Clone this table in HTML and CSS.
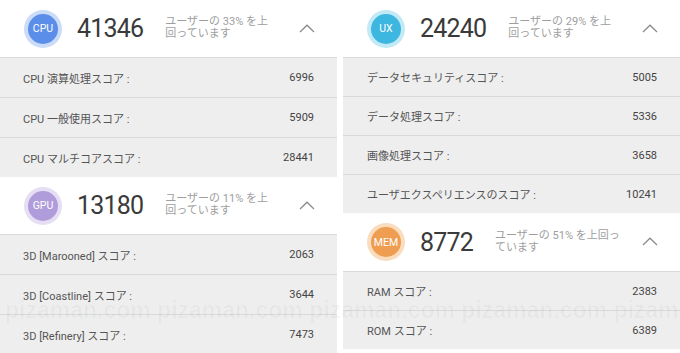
FILE: index.html
```html
<!DOCTYPE html>
<html lang="ja">
<head>
<meta charset="utf-8">
<link rel="stylesheet" href="styles.css">
</head>
<body>
<div class="page">
  <div class="panel panel-left">
    <div class="head">
      <div class="badge badge-cpu">CPU</div>
      <div class="score">41346</div>
      <div class="rank">ユーザーの 33% を上<br>回っています</div>
      <div class="chev"><svg width="16" height="9" viewBox="0 0 16 9"><path d="M1 8 L8 1.2 L15 8" fill="none" stroke="#8a8a8a" stroke-width="1.2"/></svg></div>
    </div>
    <div class="row"><span>CPU 演算処理スコア :</span><span class="val">6996</span></div>
    <div class="row"><span>CPU 一般使用スコア :</span><span class="val">5909</span></div>
    <div class="row"><span>CPU マルチコアスコア :</span><span class="val">28441</span></div>
    <div class="head">
      <div class="badge badge-gpu">GPU</div>
      <div class="score">13180</div>
      <div class="rank">ユーザーの 11% を上<br>回っています</div>
      <div class="chev"><svg width="16" height="9" viewBox="0 0 16 9"><path d="M1 8 L8 1.2 L15 8" fill="none" stroke="#8a8a8a" stroke-width="1.2"/></svg></div>
    </div>
    <div class="row"><span>3D [Marooned] スコア :</span><span class="val">2063</span></div>
    <div class="row"><span>3D [Coastline] スコア :</span><span class="val">3644</span></div>
    <div class="row"><span>3D [Refinery] スコア :</span><span class="val">7473</span></div>
  </div>
  <div class="panel panel-right">
    <div class="head">
      <div class="badge badge-ux">UX</div>
      <div class="score">24240</div>
      <div class="rank">ユーザーの 29% を上<br>回っています</div>
      <div class="chev"><svg width="16" height="9" viewBox="0 0 16 9"><path d="M1 8 L8 1.2 L15 8" fill="none" stroke="#8a8a8a" stroke-width="1.2"/></svg></div>
    </div>
    <div class="row"><span>データセキュリティスコア :</span><span class="val">5005</span></div>
    <div class="row"><span>データ処理スコア :</span><span class="val">5336</span></div>
    <div class="row"><span>画像処理スコア :</span><span class="val">3658</span></div>
    <div class="row"><span>ユーザエクスペリエンスのスコア :</span><span class="val">10241</span></div>
    <div class="head">
      <div class="badge badge-mem">MEM</div>
      <div class="score">8772</div>
      <div class="rank">ユーザーの 51% を上回っ<br>ています</div>
      <div class="chev"><svg width="16" height="9" viewBox="0 0 16 9"><path d="M1 8 L8 1.2 L15 8" fill="none" stroke="#8a8a8a" stroke-width="1.2"/></svg></div>
    </div>
    <div class="row"><span>RAM スコア :</span><span class="val">2383</span></div>
    <div class="row"><span>ROM スコア :</span><span class="val">6389</span></div>
  </div>
  <div class="watermark" aria-hidden="true">pizaman.com pizaman.com pizaman.com pizaman.com pizaman.com</div>
</div>
</body>
</html>
```

FILE: styles.css
```css
html, body {
  margin: 0;
  padding: 0;
  background: #ffffff;
}
body {
  font-family: Roboto, "Noto Sans CJK JP", sans-serif;
  width: 680px;
  height: 353px;
  overflow: hidden;
}
.page {
  position: relative;
  display: grid;
  grid-template-columns: 337px 337px;
  column-gap: 6px;
  height: 353px;
  overflow: hidden;
}
.panel {
  display: flex;
  flex-direction: column;
}
.head {
  height: 57px;
  flex: 0 0 57px;
  display: flex;
  align-items: center;
  background: #ffffff;
}
.badge {
  width: 30px;
  height: 30px;
  margin-left: 28px;
  border-radius: 50%;
  color: #ffffff;
  font-size: 10.5px;
  display: flex;
  align-items: center;
  justify-content: center;
  flex: 0 0 auto;
}
.badge-cpu { background: #5b8ee8; box-shadow: 0 0 0 4px #cadcf8; }
.badge-gpu { background: #b09cdb; box-shadow: 0 0 0 4px #e6dff4; }
.badge-ux { background: #3db6e0; box-shadow: 0 0 0 4px #c2e9f6; }
.badge-mem { background: #ef9d50; box-shadow: 0 0 0 4px #fadcbf; }
.score {
  margin-left: 19px;
  font-size: 25px;
  letter-spacing: -0.8px;
  color: #3a3a3a;
  flex: 0 0 auto;
}
.rank {
  margin-left: 22px;
  flex: 1 1 auto;
  font-size: 11px;
  line-height: 12px;
  color: #9e9e9e;
  white-space: nowrap;
  padding-bottom: 1px;
}
.chev {
  flex: 0 0 60px;
  display: flex;
  justify-content: center;
  align-items: center;
  padding-bottom: 1px;
}
.chev svg { display: block; }
.row {
  flex: 0 0 auto;
  box-sizing: border-box;
  height: 40px;
  border-top: 1px solid #d9d9d9;
  background: #eeeeee;
  display: flex;
  align-items: center;
  justify-content: space-between;
  padding: 0 23px 0 23px;
  font-size: 11px;
  color: #555555;
}
.panel-right .row {
  height: 39px;
  padding: 0 23px 0 24px;
}
.panel-right .head {
  height: 58px;
  flex-basis: 58px;
}
.panel-right .head:first-child {
  height: 57px;
  flex-basis: 57px;
}
.val {
  color: #444444;
}
.watermark {
  position: absolute;
  top: 299px;
  left: 5px;
  font-family: "Liberation Sans", Arial, sans-serif;
  font-size: 23px;
  line-height: 23px;
  font-weight: bold;
  color: rgba(0, 0, 0, 0.03);
  white-space: nowrap;
  pointer-events: none;
}
```
